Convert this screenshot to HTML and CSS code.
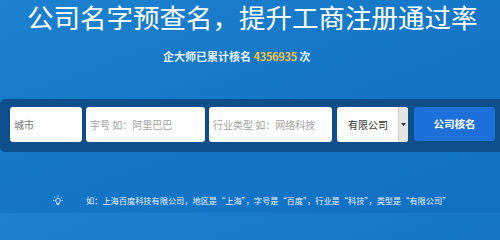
FILE: index.html
```html
<!DOCTYPE html>
<html lang="zh-CN">
<head>
<meta charset="utf-8">
<link rel="stylesheet" href="styles.css">
</head>
<body>
<div class="page">
  <h1 class="title">公司名字预查名，提升工商注册通过率</h1>
  <p class="stat">企大师已累计核名 <span class="num">4356935</span> 次</p>
  <div class="band">
    <div class="field city">城市</div>
    <div class="field name">字号 如：阿里巴巴</div>
    <div class="field industry">行业类型 如：网络科技</div>
    <div class="select">
      <span class="select-text">有限公司</span>
      <span class="select-arrow"><svg width="5" height="3" viewBox="0 0 5 3"><path d="M0 0H5L2.5 3Z" fill="#333"/></svg></span>
    </div>
    <div class="btn">公司核名</div>
  </div>
  <div class="tip">
    <svg class="bulb" width="10" height="11" viewBox="0 0 10 11" fill="none" stroke="#e6f0fa" stroke-width="0.9">
      <path d="M5 3.2a2.3 2.3 0 0 0-1.4 4.1V8.4h2.8V7.3A2.3 2.3 0 0 0 5 3.2Z"/>
      <path d="M3.8 9.6h2.4"/>
      <path d="M5 0.4v1.3M1.2 2l0.9 0.9M8.8 2l-0.9 0.9M0.3 5.5h1.2M8.5 5.5h1.2"/>
    </svg>
    <span>如：上海百度科技有限公司，地区是“上海”，字号是“百度”，行业是“科技”，类型是“有限公司”</span>
  </div>
</div>
</body>
</html>
```
FILE: styles.css
```css
html, body {
  margin: 0;
  padding: 0;
}
body {
  width: 500px;
  height: 213px;
  overflow: hidden;
  font-family: "Noto Sans CJK SC", "Noto Sans", sans-serif;
  background: linear-gradient(160deg, #1c82cf 0%, #1577c7 45%, #1270c2 100%);
}
.page {
  display: flex;
  flex-direction: column;
  height: 213px;
}
.title {
  margin: 0;
  padding: 2px 0 0 27px;
  height: 30px;
  line-height: 30px;
  font-size: 26.5px;
  font-weight: 400;
  color: #ffffff;
  white-space: nowrap;
  letter-spacing: 0;
}
.stat {
  margin: 16px 0 0 0;
  padding-left: 163px;
  height: 16px;
  line-height: 16px;
  font-size: 11px;
  font-weight: 700;
  color: #e8f1fb;
  white-space: nowrap;
}
.num {
  color: #f2c23e;
  letter-spacing: -0.3px;
}
.band {
  margin-top: 35px;
  height: 53px;
  box-sizing: border-box;
  padding: 8px 0 0 10px;
  background: #0c4f8b;
  border-radius: 5px 0 0 5px;
  display: flex;
  align-items: flex-start;
}
.field {
  height: 35px;
  line-height: 35px;
  box-sizing: border-box;
  background: #fdfdfd;
  border-radius: 3px;
  font-size: 10px;
  color: #a4a4a4;
  padding-left: 4px;
  white-space: nowrap;
  overflow: hidden;
}
.city {
  width: 72px;
  color: #777;
}
.name {
  width: 119px;
  margin-left: 4px;
}
.industry {
  width: 123px;
  margin-left: 4px;
}
.select {
  width: 71px;
  height: 35px;
  margin-left: 5px;
  display: flex;
  background: #fdfdfd;
  border-radius: 3px;
  overflow: hidden;
}
.select-text {
  flex: 1;
  text-align: center;
  line-height: 35px;
  font-size: 10px;
  color: #333;
  padding-left: 1px;
}
.select-arrow {
  width: 9px;
  background: #e4e4e4;
  border-left: 1px solid #cfcfcf;
  display: flex;
  align-items: center;
  justify-content: center;
}
.btn {
  width: 81px;
  height: 34px;
  margin-left: 6px;
  background: #1d6fd9;
  border-radius: 3px;
  color: #fff;
  font-size: 10.5px;
  font-weight: 700;
  line-height: 34px;
  text-align: center;
}
.tip {
  margin-top: 41px;
  padding-left: 53px;
  display: flex;
  align-items: center;
  height: 14px;
  white-space: nowrap;
  font-size: 8.2px;
  color: #e8f1fb;
}
.bulb {
  margin-right: 23px;
  flex: none;
}
```
